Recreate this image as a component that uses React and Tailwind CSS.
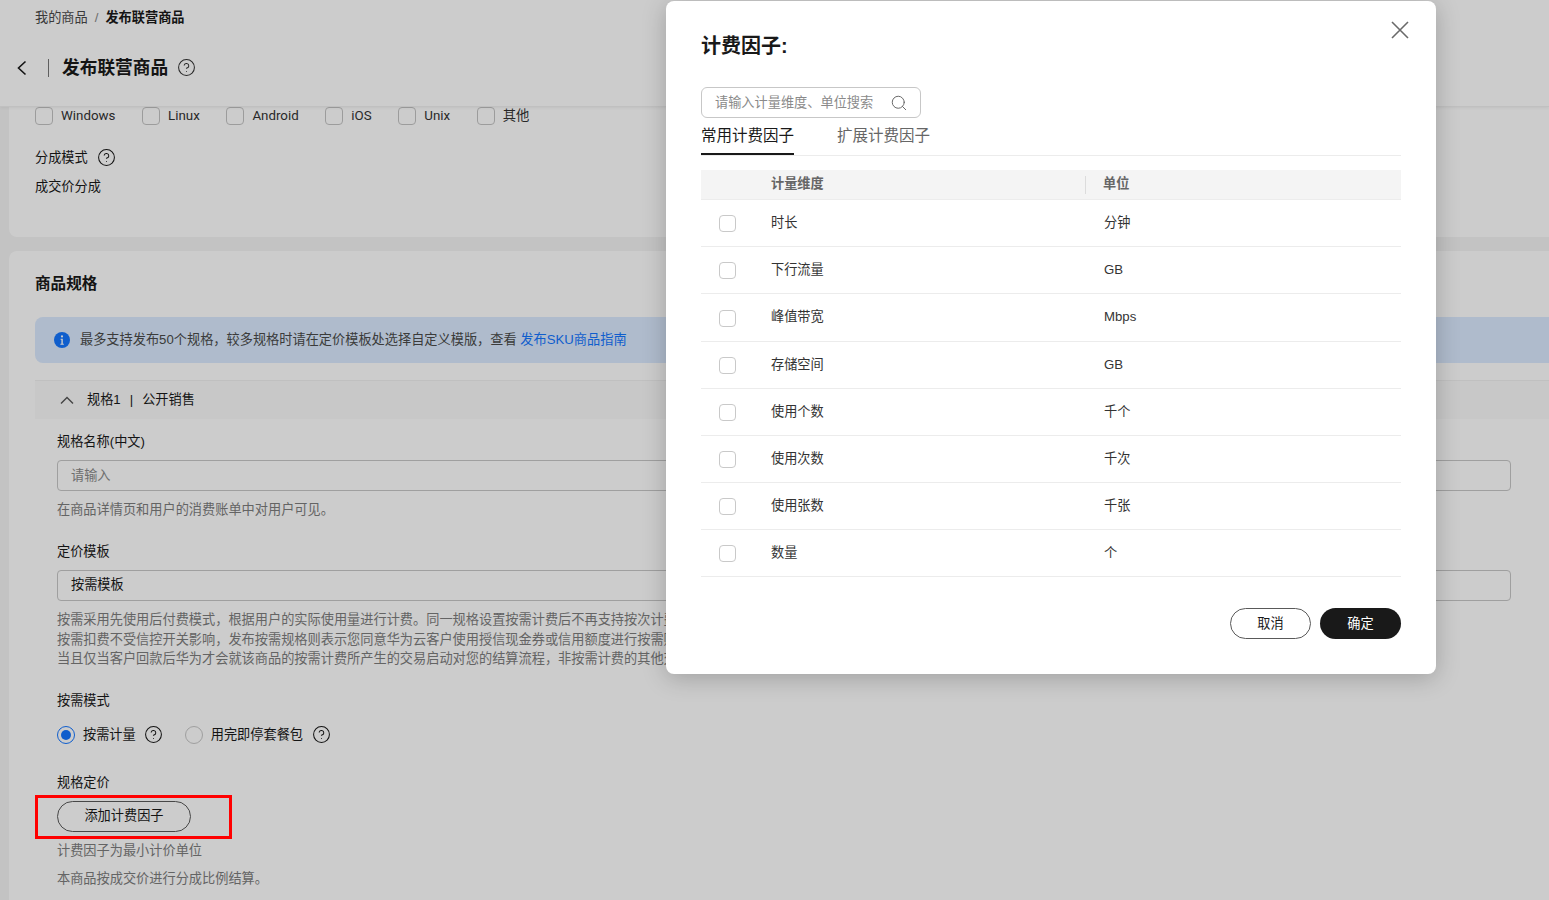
import { CircleHelp, Search } from 'lucide-react';

const osList = [
    { name: 'Windows' },
    { name: 'Linux' },
    { name: 'Android' },
    { name: 'iOS' },
    { name: 'Unix' },
    { name: '其他' },
];

const factors = [
    { dim: '时长', unit: '分钟', height: 'h-[47px]' },
    { dim: '下行流量', unit: 'GB', height: 'h-[47px]' },
    { dim: '峰值带宽', unit: 'Mbps', height: 'h-[48px]' },
    { dim: '存储空间', unit: 'GB', height: 'h-[47px]' },
    { dim: '使用个数', unit: '千个', height: 'h-[47px]' },
    { dim: '使用次数', unit: '千次', height: 'h-[47px]' },
    { dim: '使用张数', unit: '千张', height: 'h-[47px]' },
    { dim: '数量', unit: '个', height: 'h-[47px]' },
];

const Help = () => <CircleHelp size={19} strokeWidth={1.3} className="text-[#191919] shrink-0" />;

const Box = () => <span className="w-[18px] h-[18px] rounded-[4px] border border-[#c4c4c4] bg-white shrink-0" />;

const Page = () => (
    <div className="h-full flex flex-col bg-[#f4f4f4] text-[13.2px] leading-5 text-[#191919] overflow-hidden">
        {/* Header */}
        <div className="relative z-10 h-[107px] shrink-0 bg-[#ffffff] border-b border-[#f0f0f0] shadow-[0_1px_3px_rgba(0,0,0,0.06)]">
            <div className="flex items-center gap-[7px] pl-[35px] pt-[8px]">
                <span className="text-[#4a4a4a]">我的商品</span>
                <span className="text-[#888]">/</span>
                <span className="font-bold">发布联营商品</span>
            </div>
            <div className="flex items-center mt-[28px] h-[24px]">
                <svg width="12" height="18" viewBox="0 0 12 18" fill="none" className="ml-[16px]">
                    <path d="M9.5 2.5 2.5 9l7 6.5" stroke="#191919" strokeWidth="1.6" />
                </svg>
                <span className="w-px h-[18px] bg-[#777] ml-[20px]" />
                <span className="ml-[13px] pb-px text-[17.7px] leading-6 font-bold">发布联营商品</span>
                <span className="ml-[9px] pb-px"><CircleHelp size={19} strokeWidth={1.3} className="text-[#333]" /></span>
            </div>
        </div>

        <div className="w-[1600px] ml-[9px] flex flex-col gap-[14px]">
            {/* Basic info card, scrolled under the header */}
            <div className="h-[130px] bg-white rounded-bl-[8px] pl-[26px]">
                <div className="flex items-center gap-[26.6px] h-[18px]">
                    {osList.map((os) => (
                        <div key={os.name} className="flex items-center gap-2">
                            <Box />
                            <span className="font-['Roboto','Noto_Sans_CJK_SC',sans-serif] text-[13.33px] text-[#333]">{os.name}</span>
                        </div>
                    ))}
                </div>
                <div className="flex items-center gap-[9px] mt-[22px] h-5">
                    <span className="h-5 pt-px">分成模式</span>
                    <Help />
                </div>
                <div className="mt-[9px] h-5 pt-px">成交价分成</div>
            </div>

            {/* Spec card */}
            <div className="bg-white rounded-t-[8px] pl-[26px] pb-8">
                <div className="pt-[23px] text-[15.6px] leading-5 font-bold">商品规格</div>
                <div className="mt-[23px] h-[46px] flex items-center gap-[10px] pl-[19px] bg-[#dbeaff] rounded-l-[8px] text-[#4a4a4a]">
                    <svg width="16" height="16" viewBox="0 0 16 16" className="shrink-0">
                        <circle cx="8" cy="8" r="8" fill="#1476ff" />
                        <circle cx="8" cy="4.4" r="1.1" fill="#fff" />
                        <path d="M6.6 6.8h2.2v5h1v1H6.4v-1h1v-4h-.8z" fill="#fff" />
                    </svg>
                    <span>
                        最多支持发布50个规格，较多规格时请在定价模板处选择自定义模版，查看 <span className="text-[#1476ff]">发布SKU商品指南</span>
                    </span>
                </div>

                <div className="mt-[17px] h-[39px] flex items-center bg-[#fafafa] border-t border-[#f0f0f0] pl-[25px]">
                    <svg width="14" height="9" viewBox="0 0 14 9" fill="none">
                        <path d="M1 7.5 7 1.6l6 5.9" stroke="#555" strokeWidth="1.4" />
                    </svg>
                    <span className="ml-[13px]">规格1</span>
                    <span className="mx-[9px]">|</span>
                    <span>公开销售</span>
                </div>

                <div className="pl-[22px]">
                    <div className="mt-[12px] h-5 pt-px">规格名称(中文)</div>
                    <div className="mt-[9px] w-[1454px] h-[31px] border border-[#c7c7c7] rounded-[4px] pl-[13px] flex items-center text-[#8a8a8a]">请输入</div>
                    <div className="mt-2 h-5 pt-px text-[#7d7d7d]">在商品详情页和用户的消费账单中对用户可见。</div>

                    <div className="mt-[22px] h-5 pt-px">定价模板</div>
                    <div className="mt-[9px] w-[1454px] h-[31px] border border-[#c7c7c7] rounded-[4px] pl-[13px] pb-[2px] flex items-center">按需模板</div>
                    <div className="mt-[9px] leading-[19.5px] text-[#7d7d7d] whitespace-nowrap">
                        <div>按需采用先使用后付费模式，根据用户的实际使用量进行计费。同一规格设置按需计费后不再支持按次计费。</div>
                        <div>按需扣费不受信控开关影响，发布按需规格则表示您同意华为云客户使用授信现金券或信用额度进行按需购买。</div>
                        <div>当且仅当客户回款后华为才会就该商品的按需计费所产生的交易启动对您的结算流程，非按需计费的其他交易。</div>
                    </div>

                    <div className="mt-[21px] h-5 pt-px">按需模式</div>
                    <div className="mt-[15px] h-[20px] flex items-center">
                        <span className="w-[18px] h-[18px] rounded-full border border-[#1476ff] bg-white flex items-center justify-center">
                            <span className="w-[10px] h-[10px] rounded-full bg-[#1476ff]" />
                        </span>
                        <span className="ml-2">按需计量</span>
                        <span className="ml-2"><Help /></span>
                        <span className="ml-[22px] w-[18px] h-[18px] rounded-full border border-[#c7c7c7] bg-white" />
                        <span className="ml-2">用完即停套餐包</span>
                        <span className="ml-[9px]"><Help /></span>
                    </div>

                    <div className="mt-[27px] h-5 pt-px">规格定价</div>
                    <div className="mt-[9px] w-[134px] h-[31px] rounded-full border border-[#595959] pb-px flex items-center justify-center">添加计费因子</div>
                    <div className="mt-2 h-5 pt-px text-[#7d7d7d]">计费因子为最小计价单位</div>
                    <div className="mt-2 h-5 pt-px text-[#7d7d7d]">本商品按成交价进行分成比例结算。</div>
                </div>
            </div>
        </div>
    </div>
);

const FactorModal = () => (
    <div className="absolute z-30 left-[666px] top-px w-[770px] h-[673px] bg-white rounded-[8px] px-[35px] pt-[31px] text-[13.2px] leading-5 text-[#191919] shadow-[0_4px_24px_rgba(0,0,0,0.22)]">
        <button className="absolute top-[20px] right-[27px]">
            <svg width="18" height="18" viewBox="0 0 18 18" fill="none">
                <path d="M1 1l16 16M17 1 1 17" stroke="#6a6a6a" strokeWidth="1.6" />
            </svg>
        </button>
        <div className="text-[20px] leading-7 font-bold">计费因子:</div>

        <div className="mt-[27px] w-[220px] h-[31px] border border-[#c7c7c7] rounded-[6px] pl-[13px] pr-[12px] flex items-center justify-between text-[#8a8a8a]">
            <span>请输入计量维度、单位搜索</span>
            <Search size={18} strokeWidth={1.3} className="text-[#666]" />
        </div>

        <div className="flex gap-[43px] h-[38px] border-b border-[#ececec] text-[15.5px]">
            <div className="h-[37px] pt-2 border-b-[2px] border-[#191919]">常用计费因子</div>
            <div className="pt-2 text-[#666]">扩展计费因子</div>
        </div>

        <div className="mt-[14px]">
            <div className="h-[30px] flex items-center bg-[#f4f4f4] border-b border-[#ececec] text-[#666] font-bold">
                <span className="w-[70px] shrink-0" />
                <span className="w-[314px] shrink-0 pb-[2px]">计量维度</span>
                <span className="w-px h-[18px] bg-[#dcdcdc] shrink-0" />
                <span className="ml-[17px] pb-[2px]">单位</span>
            </div>
            {factors.map((row) => (
                <div key={row.dim} className={`${row.height} flex items-center border-b border-[#ececec]`}>
                    <span className="w-[70px] shrink-0 pl-[18px] flex items-center">
                        <span className="w-[17px] h-[17px] mt-px rounded-[4px] border border-[#c9c9c9] bg-white" />
                    </span>
                    <span className="w-[333px] shrink-0 pb-px text-[#333]">{row.dim}</span>
                    <span className="pb-px text-[#333]">{row.unit}</span>
                </div>
            ))}
        </div>

        <div className="mt-[31px] flex justify-end gap-[9px]">
            <button className="w-[81px] h-[31px] rounded-full border border-[#595959]">取消</button>
            <button className="w-[81px] h-[31px] rounded-full bg-[#191919] text-white">确定</button>
        </div>
    </div>
);

const App = () => (
    <div className="relative h-screen w-full overflow-hidden font-['Liberation_Sans','Noto_Sans_CJK_SC',sans-serif]">
        <Page />
        {/* Dim layer under the dialog */}
        <div className="absolute inset-0 z-20 bg-black/20" />
        <FactorModal />
        {/* Red annotation box around the add button */}
        <div className="absolute z-40 left-[35px] top-[795px] w-[197px] h-[44px] border-[3px] border-[#ff0000]" />
    </div>
);

export default App;
